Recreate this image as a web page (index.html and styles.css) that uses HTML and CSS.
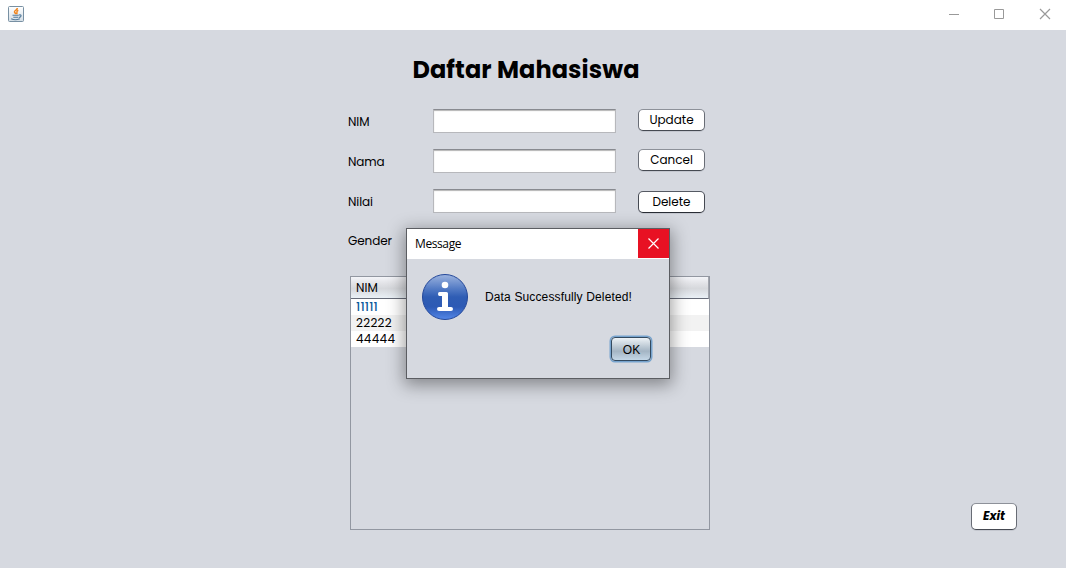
FILE: index.html
```html
<!DOCTYPE html>
<html lang="id">
<head>
<meta charset="utf-8">
<title>Daftar Mahasiswa</title>
<link rel="stylesheet" href="styles.css">
</head>
<body>
<div class="window">
  <header class="titlebar">
    <svg class="java" width="16" height="16" viewBox="0 0 16 16">
      <defs><linearGradient id="jb" x1="0" y1="0" x2="0" y2="1"><stop offset="0" stop-color="#fff"/><stop offset="1" stop-color="#d3dde5"/></linearGradient></defs>
      <rect x=".5" y=".5" width="15" height="15" rx="1" fill="url(#jb)" stroke="#7890a3"/>
      <path d="M9.300 2C9.500 4 6 4.500 6.500 6c.2.9 1.200 1 1.200 2.200M10.300 4.200C8.500 5 8.700 5.700 8.900 6.500c.1.6 0 1.200-.2 1.700" fill="none" stroke="#f0841c" stroke-width="1.500"/>
      <path d="M4.500 9.300h6.300M5.300 11.300h4.700M3.200 12.700q4 2 8.600 0M11 9q2.500-.6 2 1t-2.300 1.300" fill="none" stroke="#547b9b" stroke-width="1.100"/>
    </svg>
    <svg class="controls" width="100" height="14" viewBox="0 0 100 14" fill="none" stroke="#999">
      <path d="M0 7.500h10M45.500 2.500h9v9h-9z"/><path d="M91 2l10 10M101 2l-10 10" stroke-width="1.200"/>
    </svg>
  </header>
  <main class="content">
    <h1 class="heading">Daftar Mahasiswa</h1>
    <form class="form">
      <div class="row"><label class="label">NIM</label><input class="field"><button type="button" class="button">Update</button></div>
      <div class="row"><label class="label">Nama</label><input class="field"><button type="button" class="button">Cancel</button></div>
      <div class="row"><label class="label">Nilai</label><input class="field"><button type="button" class="button low">Delete</button></div>
      <div class="row"><label class="label gender">Gender</label></div>
    </form>
    <section class="table">
      <div class="thead">NIM</div>
      <div class="tr ones">11111</div>
      <div class="tr alt">22222</div>
      <div class="tr">44444</div>
    </section>
    <button type="button" class="button exit">Exit</button>
  </main>
  <section class="dialog">
    <header class="dialog-bar"><span class="dialog-title">Message</span>
      <span class="close"><svg width="11" height="11" viewBox="0 0 11 11"><path d="M.5.5l10 10M10.500.5l-10 10" stroke="#fff" stroke-width="1.200"/></svg></span>
    </header>
    <div class="dialog-body">
      <svg class="info" width="48" height="48" viewBox="0 0 48 48">
        <defs><linearGradient id="ib" x1="0" y1="0" x2="0" y2="1"><stop offset="0" stop-color="#9db4df"/><stop offset=".32" stop-color="#527ac4"/><stop offset=".5" stop-color="#2f5db4"/><stop offset=".72" stop-color="#2d5ab5"/><stop offset="1" stop-color="#5487e8"/></linearGradient></defs>
        <circle cx="24" cy="24" r="22.500" fill="url(#ib)" stroke="#24489a"/>
        <circle cx="24" cy="12" r="3.300" fill="#fff"/>
        <path d="M18.500 19H25.500Q27 19 27 20.500V34H30Q32 34 32 36T30 38H18Q16 38 16 36T18 34H21V23H18.500Q17 23 17 21T18.500 19z" fill="#fff"/>
      </svg>
      <span class="message">Data Successfully Deleted!</span>
    </div>
    <button type="button" class="ok">OK</button>
  </section>
</div>
</body>
</html>
```
FILE: styles.css
```css
* { box-sizing: border-box; }
body { margin: 0; overflow: hidden; color: #000; font: 12px/18px Poppins, Inter, sans-serif; }
.window { position: relative; width: 1066px; height: 568px; background: #d6d9e0; }
.titlebar { display: flex; justify-content: space-between; height: 30px; padding: 6px 17px 0 8px; background: #fff; }
.controls { margin-top: 1px; overflow: visible; }
.content { display: flex; flex-direction: column; height: 538px; padding: 22px 0 0 348px; }
.heading { width: 356px; height: 36px; margin: 0; font-size: 24px; line-height: 36px; font-weight: 700; letter-spacing: .1px; text-align: center; white-space: nowrap; }
.form { display: grid; grid-template-rows: repeat(4, 24px); row-gap: 16px; margin-top: 21px; }
.row { display: grid; grid-template-columns: 85px 205px 67px; align-items: start; }
.field { width: 183px; height: 24px; padding: 0 5px; border: 1px solid #b7b8bc; border-top-color: #888a90; border-radius: 0; background: #fff; box-shadow: inset 0 1px 1px #b5b5b5; font: inherit; outline: none; }
.label { padding-top: 4px; white-space: nowrap; letter-spacing: -.1px; }
.gender { padding-top: 3px; }
.button { height: 22px; padding: 0; border: 1px solid #686c75; border-top-color: #8d9199; border-bottom-color: #464a52; border-radius: 5px; background: #fff; box-shadow: 0 1px 0 #c4c7cf; color: #000; font: 12px/18px Poppins, Inter, sans-serif; }
.low { margin-top: 2px; border-color: #555963 #454952 #292d35; }
.table { width: 360px; height: 254px; margin: 23px 0 0 2px; border: 1px solid #9297a1; font-size: 12px; line-height: 16px; }
.thead { height: 22px; padding: 3px 5px; border-bottom: 1px solid #666b78; border-right: 1px solid #a3a6ae; background: linear-gradient(#f4f5f9, #e2e3e7 30%, #d6d8dc 55%, #eaf0f6); }
.tr { height: 16px; padding-left: 5px; background: #fff; letter-spacing: .3px; }
.alt { background: #f2f2f2; }
.ones { color: #0b5a9b; font-weight: 500; letter-spacing: .2px; }
.exit { width: 46px; height: 27px; margin: -27px 0 0 623px; padding-bottom: 1px; font-weight: 700; font-style: italic; }
.dialog { position: absolute; left: 406px; top: 228px; width: 264px; height: 151px; border: 1px solid #5b5d62; background: #d6d9e0; box-shadow: 0 4px 16px 2px rgba(0,0,0,.38); }
.dialog-bar { display: flex; justify-content: space-between; height: 30px; background: #fff; }
.dialog-title { padding: 6px 0 0 8px; font: 12px/18px "Open Sans", "Noto Sans", sans-serif; letter-spacing: -.4px; }
.close { display: flex; align-items: center; justify-content: center; width: 31px; height: 29px; background: #e81123; }
.dialog-body { display: flex; align-items: center; gap: 16px; height: 76px; padding-left: 14px; }
.message { font: 12px/16px "Liberation Sans", Arial, sans-serif; letter-spacing: .14px; white-space: nowrap; }
.ok { display: block; width: 40px; height: 24px; margin: 2px 0 0 204px; padding: 1px 0 0 1px; border: 1px solid #334a60; border-radius: 4px; background: linear-gradient(#edf2f6, #b5c3cf 45%, #a4b5c4 60%, #c4d7e7); box-shadow: 0 0 0 1.500px #76a3ce; font: 12px/18px "Liberation Sans", Arial, sans-serif; color: #000; }
```
